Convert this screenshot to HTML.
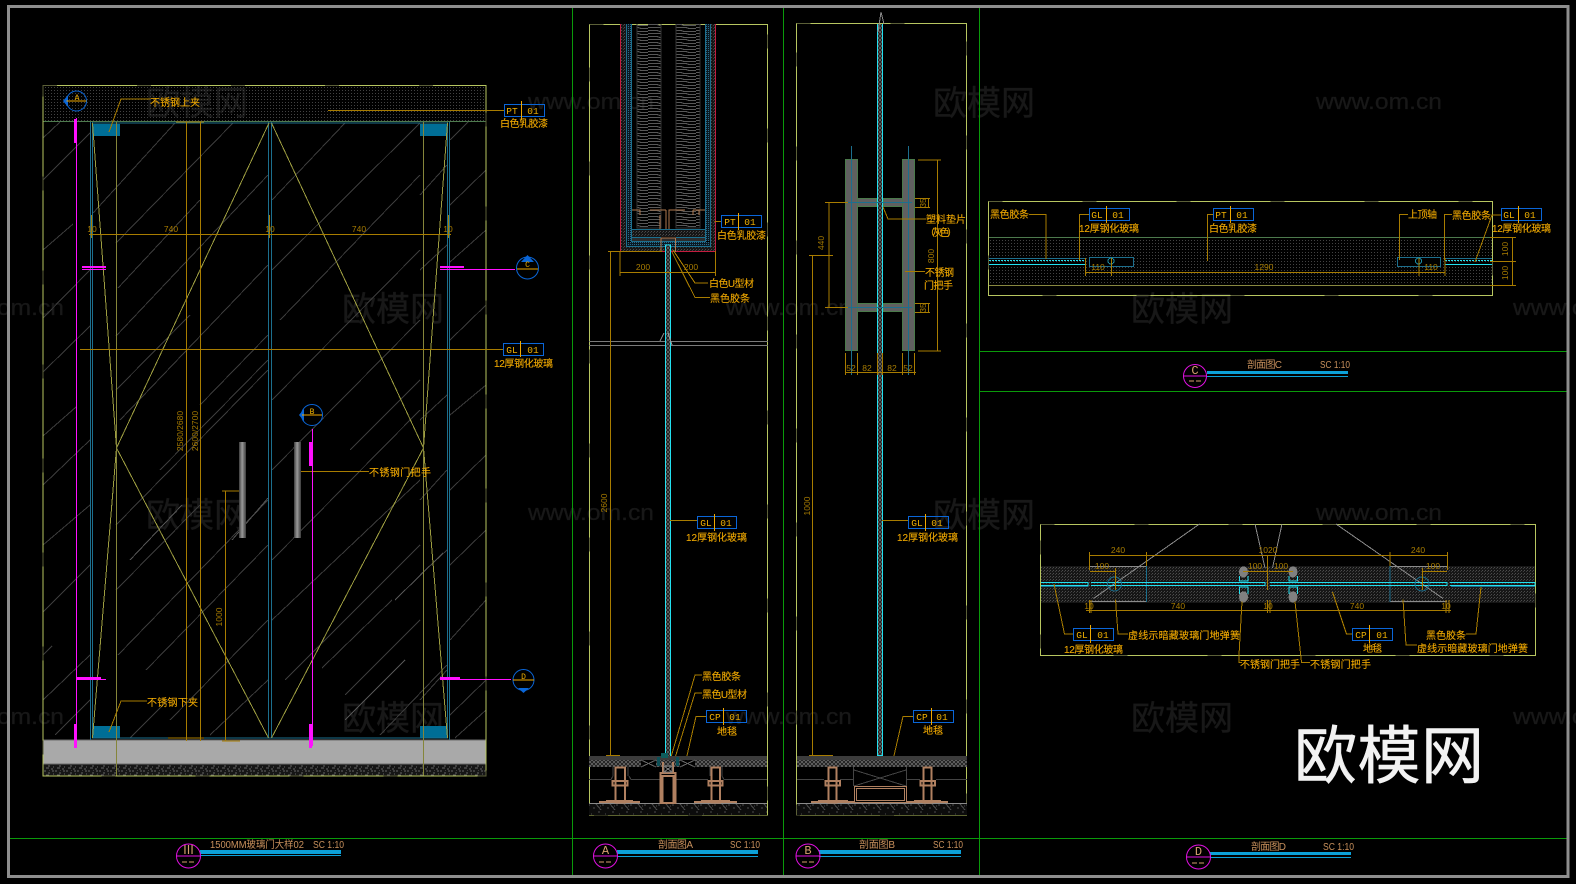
<!DOCTYPE html>
<html lang="zh-CN">
<head>
<meta charset="utf-8">
<title>Glass door CAD drawing</title>
<style>
html,body{margin:0;padding:0;background:#000;width:1576px;height:884px;overflow:hidden}
svg{display:block;position:absolute;left:0;top:0}
text{font-family:"Liberation Sans","Noto Sans CJK SC",sans-serif}
.wm{font-family:"Noto Sans CJK SC","Liberation Sans",sans-serif;font-weight:400;fill:#181818;stroke:#181818;stroke-width:.4;stroke-linejoin:round;font-size:34px}
.wu{font-family:"Liberation Sans",sans-serif;font-weight:400;fill:#181818;stroke:#181818;stroke-width:.3;font-size:22px}
.o{fill:#efa800;stroke:#efa800;stroke-width:.12;font-size:10px}
.d{fill:#a87c00;font-size:8.5px;text-anchor:middle}
.t{fill:#f0b000;font-size:9.5px;text-anchor:middle;font-family:"Liberation Mono",monospace}
.n{fill:#c8905c;font-size:10px}
.fd{fill:none;stroke:#5c6038;stroke-dasharray:14 80}
</style>
</head>
<body>
<svg width="1576" height="884" viewBox="0 0 1576 884" shape-rendering="crispEdges">
<defs>
<pattern id="dots" width="3" height="3" patternUnits="userSpaceOnUse"><rect width="1" height="1" fill="#424242"/></pattern>
<pattern id="dense" width="3" height="3" patternUnits="userSpaceOnUse"><rect width="3" height="3" fill="#161616"/><rect width="1" height="1" fill="#4c4c4c"/><rect x="2" y="1" width="1" height="1" fill="#3c3c3c"/></pattern>
<pattern id="tdots" width="2" height="2" patternUnits="userSpaceOnUse"><rect width="2" height="2" fill="#0a1a22"/><rect width="1" height="1" fill="#2a6a8c"/></pattern>
<pattern id="cross" width="4" height="4" patternUnits="userSpaceOnUse"><rect width="4" height="4" fill="#141414"/><path d="M0 0L4 4M4 0L0 4" stroke="#5c5c5c" stroke-width="1"/></pattern>
<pattern id="grav" width="11" height="7" patternUnits="userSpaceOnUse"><rect width="11" height="7" fill="#161616"/><path d="M0 1h2M4 3h2M8 1h2M2 5h3M7 6h2M5 0h1M9 4h1" stroke="#666" stroke-width="1"/></pattern>
<pattern id="zig" width="24" height="6" patternUnits="userSpaceOnUse"><path d="M0 .5h9l3 1h12M0 3.5h14l3 1h7" stroke="#585858" stroke-width="1" fill="none"/></pattern>
<pattern id="conc" width="14" height="12" patternUnits="userSpaceOnUse"><rect width="14" height="12" fill="#0c0c0c"/><path d="M0 1h2M5 4h2M10 8h2M3 10h1M12 2h1M8 0l5 6" stroke="#4c4c4c" stroke-width="1"/></pattern>
<linearGradient id="hnd" x1="0" x2="1" y1="0" y2="0"><stop offset="0" stop-color="#3c3c3c"/><stop offset=".45" stop-color="#9a9a9a"/><stop offset="1" stop-color="#3c3c3c"/></linearGradient>
</defs>

<rect width="1576" height="884" fill="#000"/>

<!-- watermarks -->
<g>
<text class="wm" x="146" y="115">欧模网</text><text class="wm" x="933" y="115">欧模网</text>
<text class="wm" x="342" y="321">欧模网</text><text class="wm" x="1131" y="321">欧模网</text>
<text class="wm" x="146" y="527">欧模网</text><text class="wm" x="933" y="527">欧模网</text>
<text class="wm" x="342" y="730">欧模网</text><text class="wm" x="1131" y="730">欧模网</text>
<text class="wu" x="528" y="109" textLength="126" lengthAdjust="spacingAndGlyphs">www.om.cn</text>
<text class="wu" x="1316" y="109" textLength="126" lengthAdjust="spacingAndGlyphs">www.om.cn</text>
<text class="wu" x="528" y="520" textLength="126" lengthAdjust="spacingAndGlyphs">www.om.cn</text>
<text class="wu" x="1316" y="520" textLength="126" lengthAdjust="spacingAndGlyphs">www.om.cn</text>
<text class="wu" x="726" y="315" textLength="126" lengthAdjust="spacingAndGlyphs">www.om.cn</text>
<text class="wu" x="726" y="724" textLength="126" lengthAdjust="spacingAndGlyphs">www.om.cn</text>
<text class="wu" x="-62" y="315" textLength="126" lengthAdjust="spacingAndGlyphs">www.om.cn</text>
<text class="wu" x="-62" y="724" textLength="126" lengthAdjust="spacingAndGlyphs">www.om.cn</text>
<text class="wu" x="1513" y="315" textLength="126" lengthAdjust="spacingAndGlyphs">www.om.cn</text>
<text class="wu" x="1513" y="724" textLength="126" lengthAdjust="spacingAndGlyphs">www.om.cn</text>
</g>

<!-- sheet frame + green grid -->
<g stroke="#0a9a0a" stroke-width="1" fill="none">
<path d="M10 838.5H1567M572.5 7V875M783.5 7V875M979.5 7V875M980 351.5H1567M980 391.5H1567"/>
</g>
<rect x="8.5" y="6.5" width="1559.5" height="870" fill="none" stroke="#8e8e8e" stroke-width="3"/>

<!-- ======= LEFT ELEVATION ======= -->
<rect x="43" y="86" width="443" height="35" fill="url(#dots)"/>
<rect x="43" y="740" width="443" height="24" fill="#a9a9a9"/>
<rect x="43" y="764" width="443" height="12" fill="url(#grav)"/>
<path d="M43 121.5H486" stroke="#4d7a4d" fill="none"/>
<path d="M43 740H486M43 764H486" stroke="#6a6a6a" fill="none"/>
<!-- diagonal hatch -->
<g stroke="#3c3c3c" stroke-width="1" fill="none">
<path d="M43 138L60 122M43 180L90 133M43 250L73 224M43 318L90 270M43 372L90 326M43 436L76 407M43 485L90 440M43 545L90 505M43 612L90 565M43 655L52 646M43 700L90 655M55 735L90 700"/>
<path d="M93 213L175 123M116 243L233 123M118 288L200 200M116 336L268 175M116 390L190 315M120 420L268 265M200 405L268 335M160 470L268 360M116 525L268 370M116 590L200 505M118 655L268 500M146 670L268 545M170 720L268 620M210 735L268 680M130 738L170 698"/>
<path d="M272 200L345 123M272 270L420 123M280 320L420 175M272 400L420 250M272 470L420 320M350 450L420 380M272 560L420 410M272 620L420 480M285 680L420 545M322 668L392 600M345 695L420 620M380 735L447 665"/>
<path d="M420 195L447 165M420 270L447 245M420 420L447 395M420 500L447 470M420 575L447 550M420 700L447 670"/>
<path d="M450 140L468 122M450 205L486 170M450 262L486 230M450 340L486 305M450 415L486 385M450 490L486 455M450 565L486 530M450 640L486 600M450 715L486 680M455 738L486 710"/>
</g>
<g stroke="#555" stroke-width="1" fill="none"><path d="M232 540L268 498M130 560L182 505M345 720L405 660M395 600L443 553"/></g>
<!-- teal blocks -->
<g fill="#006e96"><rect x="93" y="124" width="27" height="12"/><rect x="420" y="124" width="27" height="12"/><rect x="93" y="726" width="27" height="12"/><rect x="420" y="726" width="27" height="12"/></g>
<!-- door verticals -->
<g stroke="#1c6f8e" stroke-width="1" fill="none">
<path d="M90.5 122V740M92.5 122V738M268.5 122V738M271.5 122V738M447.5 122V738M449.5 122V740M92 123H448M92 738H448"/>
</g>
<!-- yellow diamonds -->
<g stroke="#9d9d40" stroke-width="1" fill="none">
<path d="M269 123L116.5 448L268.5 738M271.5 123L423.5 448L271.5 738M92.5 123L116.5 448L92.5 738M447.5 123L423.5 448L447.5 738"/>
<path d="M116.5 122V776M423.5 122V776" stroke="#85853a"/>
</g>
<!-- frame -->
<rect x="43" y="85.5" width="443" height="690.5" fill="none" stroke="#b7c660"/>
<rect x="43" y="85.5" width="443" height="690.5" class="fd"/>
<!-- dimensions -->
<g stroke="#a87c00" stroke-width="1" fill="none">
<path d="M186.5 122V741M200.5 122V741M225.5 491V741M222 491H240M222 741H240M168 738H204M176 122H204"/>
<path d="M89 234.5H451M91.5 215V238M269.5 215V238M448.5 215V238"/>
<path d="M80 349.5H503M328 110.5H504M298 471.5H369"/>
<path d="M109 132L121 99H150M109 732L121 701H147"/>
</g>
<g class="d">
<text class="d" x="92" y="232">10</text><text class="d" x="171" y="232">740</text><text class="d" x="270" y="232">10</text><text class="d" x="359" y="232">740</text><text class="d" x="448" y="232">10</text>
<text class="d" transform="translate(183 431) rotate(-90)">2580/2680</text>
<text class="d" transform="translate(198 431) rotate(-90)">2600/2700</text>
<text class="d" transform="translate(222 617) rotate(-90)">1000</text>
</g>
<!-- handles -->
<rect x="239" y="442" width="7" height="96" fill="url(#hnd)"/>
<rect x="294" y="442" width="7" height="96" fill="url(#hnd)"/>
<!-- magenta section marks -->
<g fill="#ff10ff">
<rect x="76" y="118" width="1" height="629"/><rect x="74" y="119" width="3" height="24"/><rect x="74" y="724" width="3" height="24"/>
<rect x="312" y="429" width="1" height="317"/><rect x="309" y="442" width="3" height="24"/><rect x="309" y="724" width="3" height="24"/>
<rect x="82" y="266" width="24" height="2"/><rect x="82" y="269" width="24" height="1"/>
<rect x="440" y="266" width="24" height="2"/><rect x="440" y="269" width="75" height="1"/>
<rect x="77" y="677" width="24" height="2"/><rect x="77" y="679" width="29" height="1"/>
<rect x="440" y="677" width="20" height="2"/><rect x="440" y="679" width="71" height="1"/>
</g>
<!-- bubbles -->
<g shape-rendering="auto">
<g fill="none" stroke="#0a66d8"><circle cx="76.5" cy="101" r="10"/><circle cx="312" cy="415" r="10.5"/><circle cx="527.5" cy="268" r="11"/><circle cx="523.5" cy="680" r="10.5"/></g>
<path d="M63 101L68 95V107Z" fill="#0a66d8"/><path d="M299 415L304 409V421Z" fill="#0a66d8"/><path d="M527.5 255L521 262H534Z" fill="#0a66d8"/><path d="M523.5 693L518 688H529Z" fill="#0a66d8"/>
<path d="M66.5 101H86.5M302 415H322M517 269H538M513 680H534" stroke="#f0a800" fill="none"/>
</g>
<text class="t" x="77" y="100" style="font-size:8px">A</text><text class="t" x="312" y="414" style="font-size:8px">B</text><text class="t" x="527.5" y="267" style="font-size:8px">C</text><text class="t" x="523.5" y="679" style="font-size:8px">D</text>
<!-- tags & labels -->
<g>
<text class="o" x="150" y="106" textLength="50">不锈钢上夹</text>
<text class="o" x="147" y="706" textLength="51">不锈钢下夹</text>
<text class="o" x="369" y="476" textLength="62">不锈钢门把手</text>
<text class="o" x="500" y="127" textLength="48">白色乳胶漆</text>
<text class="o" x="494" y="367" textLength="59">12厚钢化玻璃</text>
</g>
<g fill="none" stroke="#0a66d8"><rect x="504.5" y="104.5" width="40" height="12"/><rect x="503.5" y="343.5" width="40" height="12"/></g>
<path d="M521.5 101V120M520.5 341V357" stroke="#f0a800" fill="none"/>
<text class="t" x="512" y="114">PT</text><text class="t" x="533" y="114">01</text>
<text class="t" x="512" y="353">GL</text><text class="t" x="533" y="353">01</text>

<!-- ======= SECTION A ======= -->
<rect x="589.5" y="24.5" width="178" height="790.5" fill="none" stroke="#b7c660"/>
<rect x="589.5" y="24.5" width="178" height="790.5" class="fd"/>
<path d="M589 341.5H768M589 345.5H768" stroke="#7a7a7a" fill="none"/>
<rect x="621" y="24" width="5" height="227" fill="url(#dense)"/><rect x="711" y="24" width="4" height="227" fill="url(#dense)"/>
<rect x="627" y="24" width="4" height="217" fill="url(#tdots)"/><rect x="706" y="24" width="4" height="217" fill="url(#tdots)"/>
<rect x="627" y="242" width="83" height="4" fill="url(#tdots)"/>
<rect x="621" y="247" width="94" height="4" fill="url(#dense)"/>
<rect x="637" y="24" width="24" height="204" fill="url(#zig)"/>
<rect x="676" y="24" width="24" height="204" fill="url(#zig)"/>
<rect x="632" y="230" width="73" height="7" fill="url(#dense)"/>
<rect x="632" y="238" width="73" height="4" fill="#2c2c2c"/>
<g stroke="#1c6f8e" fill="none"><path d="M626.5 24V246.5H710.5V24M631.5 24V241.5H705.5V24M632 229.5H705M632 237.5H661M676 237.5H705"/></g>
<path d="M620.5 24V251.5H715.5V24" stroke="#c41c3e" fill="none"/>
<path d="M637 24V228H661V24M676 24V228H700V24" stroke="#333" fill="none"/>
<g stroke="#b07a50" fill="none"><path d="M632 210H640V215M666 210V229M650 210H666M660 215V229M669 229V210H685M693 210H705M693 210V215M699 215V210M661 238V252M661 238H675.5V252"/></g>
<!-- glass -->
<rect x="666" y="245" width="5" height="517" fill="url(#cross)"/>
<path d="M665.5 262V762.5H670.5V245H665.5V262" stroke="#22e0f0" fill="none"/>
<path d="M660 341L664 333M668 333L672 345" stroke="#999" fill="none"/>
<!-- dims A -->
<g stroke="#a87c00" fill="none">
<path d="M619.5 272.5H716M620 251V276M715.5 251V276M608 251.5H662M610.5 251V756M606 755.5H620"/>
<path d="M673 250L695 283H708M672 252L695 297.5H710M714.5 221.5H721M671 757L695 675H702M675 758L695 693H702M686 760L696 716.5H706"/>
<path d="M670 520.5H697.5"/>
</g>
<text class="d" x="643" y="270">200</text><text class="d" x="691" y="270">200</text>
<text class="d" transform="translate(607 503) rotate(-90)">2600</text>
<g>
<text class="o" x="717" y="239" textLength="49">白色乳胶漆</text>
<text class="o" x="709" y="287" textLength="45">白色U型材</text>
<text class="o" x="710" y="302" textLength="40">黑色胶条</text>
<text class="o" x="702" y="680" textLength="39">黑色胶条</text>
<text class="o" x="702" y="698" textLength="45">黑色U型材</text>
<text class="o" x="686" y="541" textLength="61">12厚钢化玻璃</text>
<text class="o" x="717" y="735" textLength="20">地毯</text>
</g>
<g fill="none" stroke="#0a66d8"><rect x="721.5" y="215.5" width="40" height="12"/><rect x="697.5" y="516.5" width="39" height="12"/><rect x="706.5" y="710.5" width="40" height="12"/></g>
<path d="M738.5 213V230M714.5 514V531M723.5 708V725" stroke="#f0a800" fill="none"/>
<text class="t" x="730" y="225">PT</text><text class="t" x="750" y="225">01</text>
<text class="t" x="706" y="526">GL</text><text class="t" x="726" y="526">01</text>
<text class="t" x="715" y="720">CP</text><text class="t" x="735" y="720">01</text>
<!-- floor A -->
<rect x="589" y="756" width="178" height="4" fill="#3c3c3c"/>
<rect x="589" y="760" width="178" height="7" fill="url(#cross)"/>
<rect x="641" y="760" width="15" height="7" fill="#000"/><rect x="680" y="760" width="15" height="7" fill="#000"/>
<path d="M641 760L656 767M656 760L641 767M680 760L695 767M695 760L680 767" stroke="#666" fill="none"/>
<rect x="589" y="804" width="178" height="11" fill="url(#conc)"/>
<path d="M589 803.5H767" stroke="#8a8a8a" fill="none"/>
<path d="M589 779.5H611L613 776M629 776L631 779.5H660M676 779.5H708M722 776L724 779.5H767M613 767V776M628 767V776M710 767V776M722 767V776" stroke="#444" fill="none"/>
<g fill="none" stroke="#b08060" stroke-width="1.6">
<rect x="615.5" y="767.5" width="9.5" height="35"/><path d="M612.5 781H627.5V785.5H612.5Z"/>
<rect x="711.5" y="767.5" width="8.5" height="35"/><path d="M708.5 781H722.5V785.5H708.5Z"/>
<rect x="660.5" y="773" width="15" height="30"/><rect x="662.5" y="776" width="11" height="27"/>
<path d="M663 762V772M673 762V772"/>
</g>
<path d="M599 803H640V801H633V800H606V801H599ZM694 803H737V801H730V800H701V801H694Z" fill="#b08060"/>
<rect x="657" y="757" width="3" height="9" fill="#0d4f56"/><rect x="676" y="757" width="3" height="9" fill="#0d4f56"/>
<rect x="661" y="753" width="7" height="5" fill="#0f5c5c"/>
<path d="M664 766H672V772H664ZM664 766L672 772M672 766L664 772" stroke="#777" fill="none"/>

<!-- ======= SECTION B ======= -->
<rect x="796.5" y="23.5" width="170" height="791.5" fill="none" stroke="#b7c660"/>
<rect x="796.5" y="23.5" width="170" height="791.5" class="fd"/>
<rect x="878" y="24" width="5" height="732" fill="url(#cross)"/>
<path d="M877.5 24V755.5H882.5V24" stroke="#22e0f0" fill="none"/>
<path d="M878 32L881 12L884 24" stroke="#888" fill="none"/>
<!-- handle -->
<g fill="#606060" stroke="#4a7a4a">
<rect x="845.5" y="159.5" width="12" height="191"/><rect x="902.5" y="159.5" width="12" height="191"/>
<rect x="857.5" y="198.5" width="19" height="8"/><rect x="883.5" y="198.5" width="19" height="8"/>
<rect x="857.5" y="303.5" width="19" height="8"/><rect x="883.5" y="303.5" width="19" height="8"/>
</g>
<path d="M851.5 146V375M908.5 146V375M848 202.5H912M848 307.5H912" stroke="#1c6f8e" fill="none"/>
<g stroke="#a87c00" fill="none">
<path d="M937.5 160V351M918 160H941M918 351H941M915 198.5H930M915 207.5H930M928.5 198V208M915 303.5H930M915 312.5H930M928.5 303V313"/>
<path d="M829 202V308M825 202.5H848M825 307.5H848M812.5 256V756M809 255.5H833M809 755.5H833"/>
<path d="M845 372.5H916M845.5 353V375M857.5 353V375M877.5 353V375M882.5 353V375M902.5 353V375M914.5 353V375"/>
<path d="M883 207L888 219H926M905 271.5H925M882 520.5H908.5M893 760L903 716.5H913"/>
</g>
<g>
<text class="d" transform="translate(934 256) rotate(-90)">800</text>
<text class="d" transform="translate(926 203) rotate(-90)">35</text>
<text class="d" transform="translate(926 308) rotate(-90)">35</text>
<text class="d" transform="translate(824 243) rotate(-90)">440</text>
<text class="d" transform="translate(810 506) rotate(-90)">1000</text>
<text class="d" x="851" y="371">52</text><text class="d" x="867" y="371">82</text><text class="d" x="892" y="371">82</text><text class="d" x="908" y="371">52</text>
</g>
<text class="o" x="926" y="223" textLength="40">塑料垫片</text>
<text class="o" x="925" y="236" textLength="32">（灰色）</text>
<text class="o" x="925" y="276" textLength="29">不锈钢</text>
<text class="o" x="924" y="289" textLength="29">门把手</text>
<text class="o" x="897" y="541" textLength="61">12厚钢化玻璃</text>
<text class="o" x="923" y="734" textLength="20">地毯</text>
<g fill="none" stroke="#0a66d8"><rect x="908.5" y="516.5" width="40" height="12"/><rect x="913.5" y="710.5" width="40" height="12"/></g>
<path d="M925.5 514V531M931.5 708V725" stroke="#f0a800" fill="none"/>
<text class="t" x="917" y="526">GL</text><text class="t" x="937" y="526">01</text>
<text class="t" x="922" y="720">CP</text><text class="t" x="942" y="720">01</text>
<!-- floor B -->
<rect x="797" y="756" width="170" height="4" fill="#3c3c3c"/>
<rect x="797" y="760" width="170" height="7" fill="url(#cross)"/>
<rect x="797" y="804" width="170" height="11" fill="url(#conc)"/>
<path d="M797 803.5H967" stroke="#8a8a8a" fill="none"/>
<path d="M797 779.5H824M840 779.5H853M907 779.5H920M936 779.5H967M853.5 767V786M906.5 767V786M854 770L906 786M906 770L854 786" stroke="#444" fill="none"/>
<g fill="none" stroke="#b08060" stroke-width="1.6">
<rect x="828.5" y="767.5" width="8" height="35"/><path d="M825.5 781H840V785.5H825.5Z"/>
<rect x="923.5" y="767.5" width="8" height="35"/><path d="M920.5 781H935V785.5H920.5Z"/>
</g>
<path d="M811 803H855V801H848V800H818V801H811ZM907 803H948V801H941V800H914V801H907Z" fill="#b08060"/>
<g fill="none" stroke="#b08060"><rect x="854.5" y="786.5" width="52" height="16"/><rect x="856.5" y="788.5" width="48" height="12"/></g>

<!-- ======= SECTION C ======= -->
<rect x="989" y="238" width="503" height="47" fill="url(#dots)"/>
<rect x="988.5" y="201.5" width="504" height="94" fill="none" stroke="#b7c660"/>
<rect x="988.5" y="201.5" width="504" height="94" class="fd"/>
<path d="M989 237.5H1492" stroke="#4d7a4d" fill="none"/>
<path d="M989 285.5H1492" stroke="#888840" fill="none"/>
<g stroke="#22e0f0" fill="none"><path d="M989 264.5H1085M1445 264.5H1492"/><path d="M989 260.5H1085M1445 260.5H1492" stroke-dasharray="2 1"/></g>
<path d="M989 258.5H1085M1445 258.5H1492" stroke="#1c6f8e" fill="none"/>
<g fill="#000" stroke="#1c6f8e"><rect x="1089.5" y="257.5" width="44" height="9"/><rect x="1397.5" y="257.5" width="43" height="9"/></g>
<g fill="none" stroke="#1c8fa8"><circle cx="1111" cy="261" r="3"/><circle cx="1418.5" cy="261" r="3"/></g>
<g stroke="#a87c00" fill="none">
<path d="M1085 272.5H1445M1085.5 258V276M1445 258V276M1111.5 258V276M1419 258V276"/>
<path d="M1512.5 237.5V285.5M1490 237.5H1516M1490 261.5H1516M1490 285.5H1516"/>
<path d="M1029 214.5H1046V259M1079.5 260V214.5H1089M1207.5 261V214.5H1213M1399.5 260V214.5H1408M1444.5 260V214.5H1452M1475 262L1492 215H1501"/>
</g>
<text class="d" x="1098" y="270">110</text><text class="d" x="1264" y="270">1290</text><text class="d" x="1431" y="270">110</text>
<text class="d" transform="translate(1508 249) rotate(-90)">100</text>
<text class="d" transform="translate(1508 273) rotate(-90)">100</text>
<text class="o" x="990" y="218" textLength="39">黑色胶条</text>
<text class="o" x="1079" y="232" textLength="60">12厚钢化玻璃</text>
<text class="o" x="1209" y="232" textLength="48">白色乳胶漆</text>
<text class="o" x="1408" y="218" textLength="29">上顶轴</text>
<text class="o" x="1452" y="219" textLength="39">黑色胶条</text>
<text class="o" x="1492" y="232" textLength="59">12厚钢化玻璃</text>
<g fill="none" stroke="#0a66d8"><rect x="1089.5" y="208.5" width="40" height="12"/><rect x="1213.5" y="208.5" width="40" height="12"/><rect x="1501.5" y="208.5" width="40" height="12"/></g>
<path d="M1106.5 206V223M1230.5 206V223M1518.5 206V223" stroke="#f0a800" fill="none"/>
<text class="t" x="1097" y="218">GL</text><text class="t" x="1118" y="218">01</text>
<text class="t" x="1221" y="218">PT</text><text class="t" x="1242" y="218">01</text>
<text class="t" x="1509" y="218">GL</text><text class="t" x="1530" y="218">01</text>

<!-- ======= SECTION D ======= -->
<rect x="1041" y="566" width="494" height="37" fill="url(#dense)"/>
<rect x="1040.5" y="524.5" width="495" height="131" fill="none" stroke="#b7c660"/>
<rect x="1040.5" y="524.5" width="495" height="131" class="fd"/>
<g stroke="#8a8a8a" fill="none">
<path d="M1199.5 524L1093.5 598.5M1336 524L1443 598.5M1255 524L1265 568M1282 524L1272.5 568"/>
<path d="M1090 566.5H1146M1390 566.5H1447M1090 601.5H1146M1390 601.5H1447"/>
</g>
<path d="M1146.5 566V602M1390 566V602M1041 586.5H1088M1451 586.5H1535" stroke="#1c6f8e" fill="none"/>
<path d="M1041 582.5H1088V585.5H1041M1091 582.5H1265V585.5H1091M1270 582.5H1447V585.5H1270M1450 582.5H1535V585.5H1450" stroke="#22e0f0" fill="none"/>
<g fill="none" stroke="#1c6f8e" shape-rendering="auto"><circle cx="1114.5" cy="584" r="7"/><circle cx="1422" cy="584" r="7"/></g>
<g fill="#808080"><ellipse cx="1243.5" cy="572" rx="4.5" ry="5.5"/><ellipse cx="1243.5" cy="597" rx="4.5" ry="5.5"/><ellipse cx="1293" cy="572" rx="4.5" ry="5.5"/><ellipse cx="1293" cy="597" rx="4.5" ry="5.5"/></g>
<path d="M1239.5 576V581H1248V576M1239.5 594V587H1248V594M1289 576V581H1297.5V576M1289 594V587H1297.5V594" stroke="#22e0f0" fill="none"/>
<g stroke="#a87c00" fill="none">
<path d="M1089 555.5H1448M1089.5 552V570M1146.5 552V566M1390 552V566M1447.5 552V570"/>
<path d="M1090 571.5H1115M1115.5 568V590M1243 571.5H1267M1269 571.5H1293M1422 571.5H1447M1422.5 568V590M1267.5 555V590"/>
<path d="M1086 610.5H1451M1089.5 600V613M1091 600V613M1267.5 600V613M1270 600V613M1446 600V613M1449 600V613"/>
<path d="M1054 584L1064.5 634H1073M1115.5 599.5L1118 634H1128M1242 601.5L1239 655V662.5H1242M1295 601.5L1301.5 662.5H1310M1332.5 592L1346.5 634H1352.5M1481 587L1476 634H1466M1403 599.5L1406 645H1417"/>
</g>
<text class="d" x="1118" y="553">240</text><text class="d" x="1268" y="553">1020</text><text class="d" x="1418" y="553">240</text>
<text class="d" x="1102" y="569">100</text><text class="d" x="1255" y="569">100</text><text class="d" x="1281" y="569">100</text><text class="d" x="1433" y="569">100</text>
<text class="d" x="1089" y="609">10</text><text class="d" x="1178" y="609">740</text><text class="d" x="1268" y="609">10</text><text class="d" x="1357" y="609">740</text><text class="d" x="1446" y="609">10</text>
<text class="o" x="1064" y="653" textLength="59">12厚钢化玻璃</text>
<text class="o" x="1128" y="639" textLength="112">虚线示暗藏玻璃门地弹簧</text>
<text class="o" x="1240" y="668" textLength="60">不锈钢门把手</text>
<text class="o" x="1310" y="668" textLength="61">不锈钢门把手</text>
<text class="o" x="1426" y="639" textLength="40">黑色胶条</text>
<text class="o" x="1417" y="652" textLength="111">虚线示暗藏玻璃门地弹簧</text>
<text class="o" x="1363" y="652" textLength="19">地毯</text>
<g fill="none" stroke="#0a66d8"><rect x="1073.5" y="628.5" width="40" height="12"/><rect x="1352.5" y="628.5" width="40" height="12"/></g>
<path d="M1090.5 625V643M1369.5 625V643" stroke="#f0a800" fill="none"/>
<text class="t" x="1082" y="638">GL</text><text class="t" x="1103" y="638">01</text>
<text class="t" x="1361" y="638">CP</text><text class="t" x="1382" y="638">01</text>

<!-- ======= TITLE BARS ======= -->
<g fill="#0ca0d8">
<rect x="200" y="850" width="141" height="4"/><rect x="200" y="855" width="141" height="1"/>
<rect x="617" y="850" width="141" height="4"/><rect x="617" y="856" width="141" height="1"/>
<rect x="819" y="850" width="142" height="4"/><rect x="819" y="856" width="142" height="1"/>
<rect x="1207" y="371" width="141" height="3"/><rect x="1207" y="376" width="141" height="1"/>
<rect x="1210" y="852" width="141" height="3"/><rect x="1210" y="857" width="141" height="1"/>
</g>
<g fill="none" stroke="#e010e0" shape-rendering="auto">
<circle cx="188.5" cy="856" r="12"/><circle cx="605.5" cy="856" r="12"/><circle cx="808" cy="856" r="12"/><circle cx="1195" cy="376" r="11.5"/><circle cx="1198.5" cy="857" r="12"/>
</g>
<path d="M176 856H200M593 856H617M796 856H820M1183 376H1207M1186 857H1210" stroke="#e010e0" fill="none"/>
<path d="M182 862H195M599 862H612M802 862H815M1189 381H1202M1192 863H1205" stroke="#d8a070" stroke-dasharray="5 2" fill="none"/>
<g font-size="12" fill="#d8a070" text-anchor="middle">
<text x="188.5" y="854" style="font-family:'Liberation Mono',monospace">Ⅲ</text>
<text x="605.5" y="854" style="font-family:'Liberation Mono',monospace">A</text>
<text x="808" y="854" style="font-family:'Liberation Mono',monospace">B</text>
<text x="1195" y="374" style="font-family:'Liberation Mono',monospace">C</text>
<text x="1198.5" y="855" style="font-family:'Liberation Mono',monospace">D</text>
</g>
<text class="n" x="210" y="848" textLength="94" lengthAdjust="spacingAndGlyphs">1500MM玻璃门大样02</text>
<text class="n" x="313" y="848" textLength="31" lengthAdjust="spacingAndGlyphs">SC 1:10</text>
<text class="n" x="658" y="848" textLength="35">剖面图A</text><text class="n" x="730" y="848" textLength="30" lengthAdjust="spacingAndGlyphs">SC 1:10</text>
<text class="n" x="859" y="848" textLength="36">剖面图B</text><text class="n" x="933" y="848" textLength="30" lengthAdjust="spacingAndGlyphs">SC 1:10</text>
<text class="n" x="1247" y="368" textLength="35">剖面图C</text><text class="n" x="1320" y="368" textLength="30" lengthAdjust="spacingAndGlyphs">SC 1:10</text>
<text class="n" x="1251" y="850" textLength="35">剖面图D</text><text class="n" x="1323" y="850" textLength="31" lengthAdjust="spacingAndGlyphs">SC 1:10</text>

<!-- big logo -->
<text x="1294" y="778" font-size="63" fill="#f2f2f2" stroke="#f2f2f2" stroke-width=".6" stroke-linejoin="round" style="font-family:'WenQuanYi Zen Hei','Noto Sans CJK SC',sans-serif" shape-rendering="auto" textLength="190">欧模网</text>
</svg>
</body>
</html>
